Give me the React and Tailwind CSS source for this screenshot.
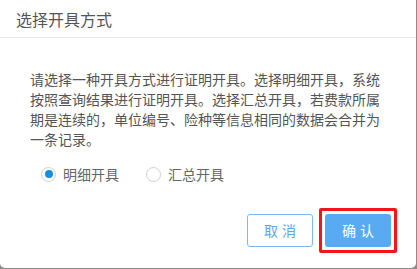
import React, { useState } from 'react';

const font = { fontFamily: '"Microsoft YaHei", "Noto Sans CJK SC", sans-serif' };

const Radio = ({ checked, label, onClick }) => (
  <label className="flex items-center cursor-pointer" onClick={onClick}>
    <span className="w-[15px] h-[15px] rounded-full border border-[#d0d0d0] bg-white flex items-center justify-center">
      {checked && <span className="w-[8px] h-[8px] rounded-full bg-[#168fe0]" />}
    </span>
    <span className="ml-[7px] text-[14px] leading-[20px] text-[#666]">{label}</span>
  </label>
);

export default function App() {
  const [mode, setMode] = useState('detail');

  return (
    <div className="w-[417px] h-[269px] bg-[#8c8c8c]" style={font}>
      <div className="w-[416px] h-[268px] bg-white rounded-b-[5px] flex flex-col">
        {/* Header */}
        <div className="h-[38px] border-b border-[#e8e8e8] flex items-center pl-[16px]">
          <span className="text-[16px] text-[#555]">选择开具方式</span>
        </div>

        {/* Body */}
        <div className="pt-[31px] px-[30px]">
          <p className="text-[14px] leading-[20px] text-[#555]">
            请选择一种开具方式进行证明开具。选择明细开具，系统按照查询结果进行证明开具。选择汇总开具，若费款所属期是连续的，单位编号、险种等信息相同的数据会合并为一条记录。
          </p>
          <div className="flex items-center gap-[27px] mt-[15px] pl-[11px]">
            <Radio checked={mode === 'detail'} label="明细开具" onClick={() => setMode('detail')} />
            <Radio checked={mode === 'sum'} label="汇总开具" onClick={() => setMode('sum')} />
          </div>
        </div>

        {/* Footer */}
        <div className="flex justify-end items-center gap-[6px] pr-[19px] mt-[24px]">
          <button className="w-[66px] h-[33px] rounded-[3px] border border-[#7db9ef] bg-white text-[14px] text-[#5ea6ea] tracking-[4px] pl-[4px]">
            取消
          </button>
          {/* highlighted confirm */}
          <span className="flex p-[3px] border-[3px] border-[#f5141a] rounded-[2px]">
            <button className="w-[66px] h-[33px] rounded-[3px] bg-[#58abf3] text-[14px] text-white tracking-[4px] pl-[4px]">
              确认
            </button>
          </span>
        </div>
      </div>
    </div>
  );
}
